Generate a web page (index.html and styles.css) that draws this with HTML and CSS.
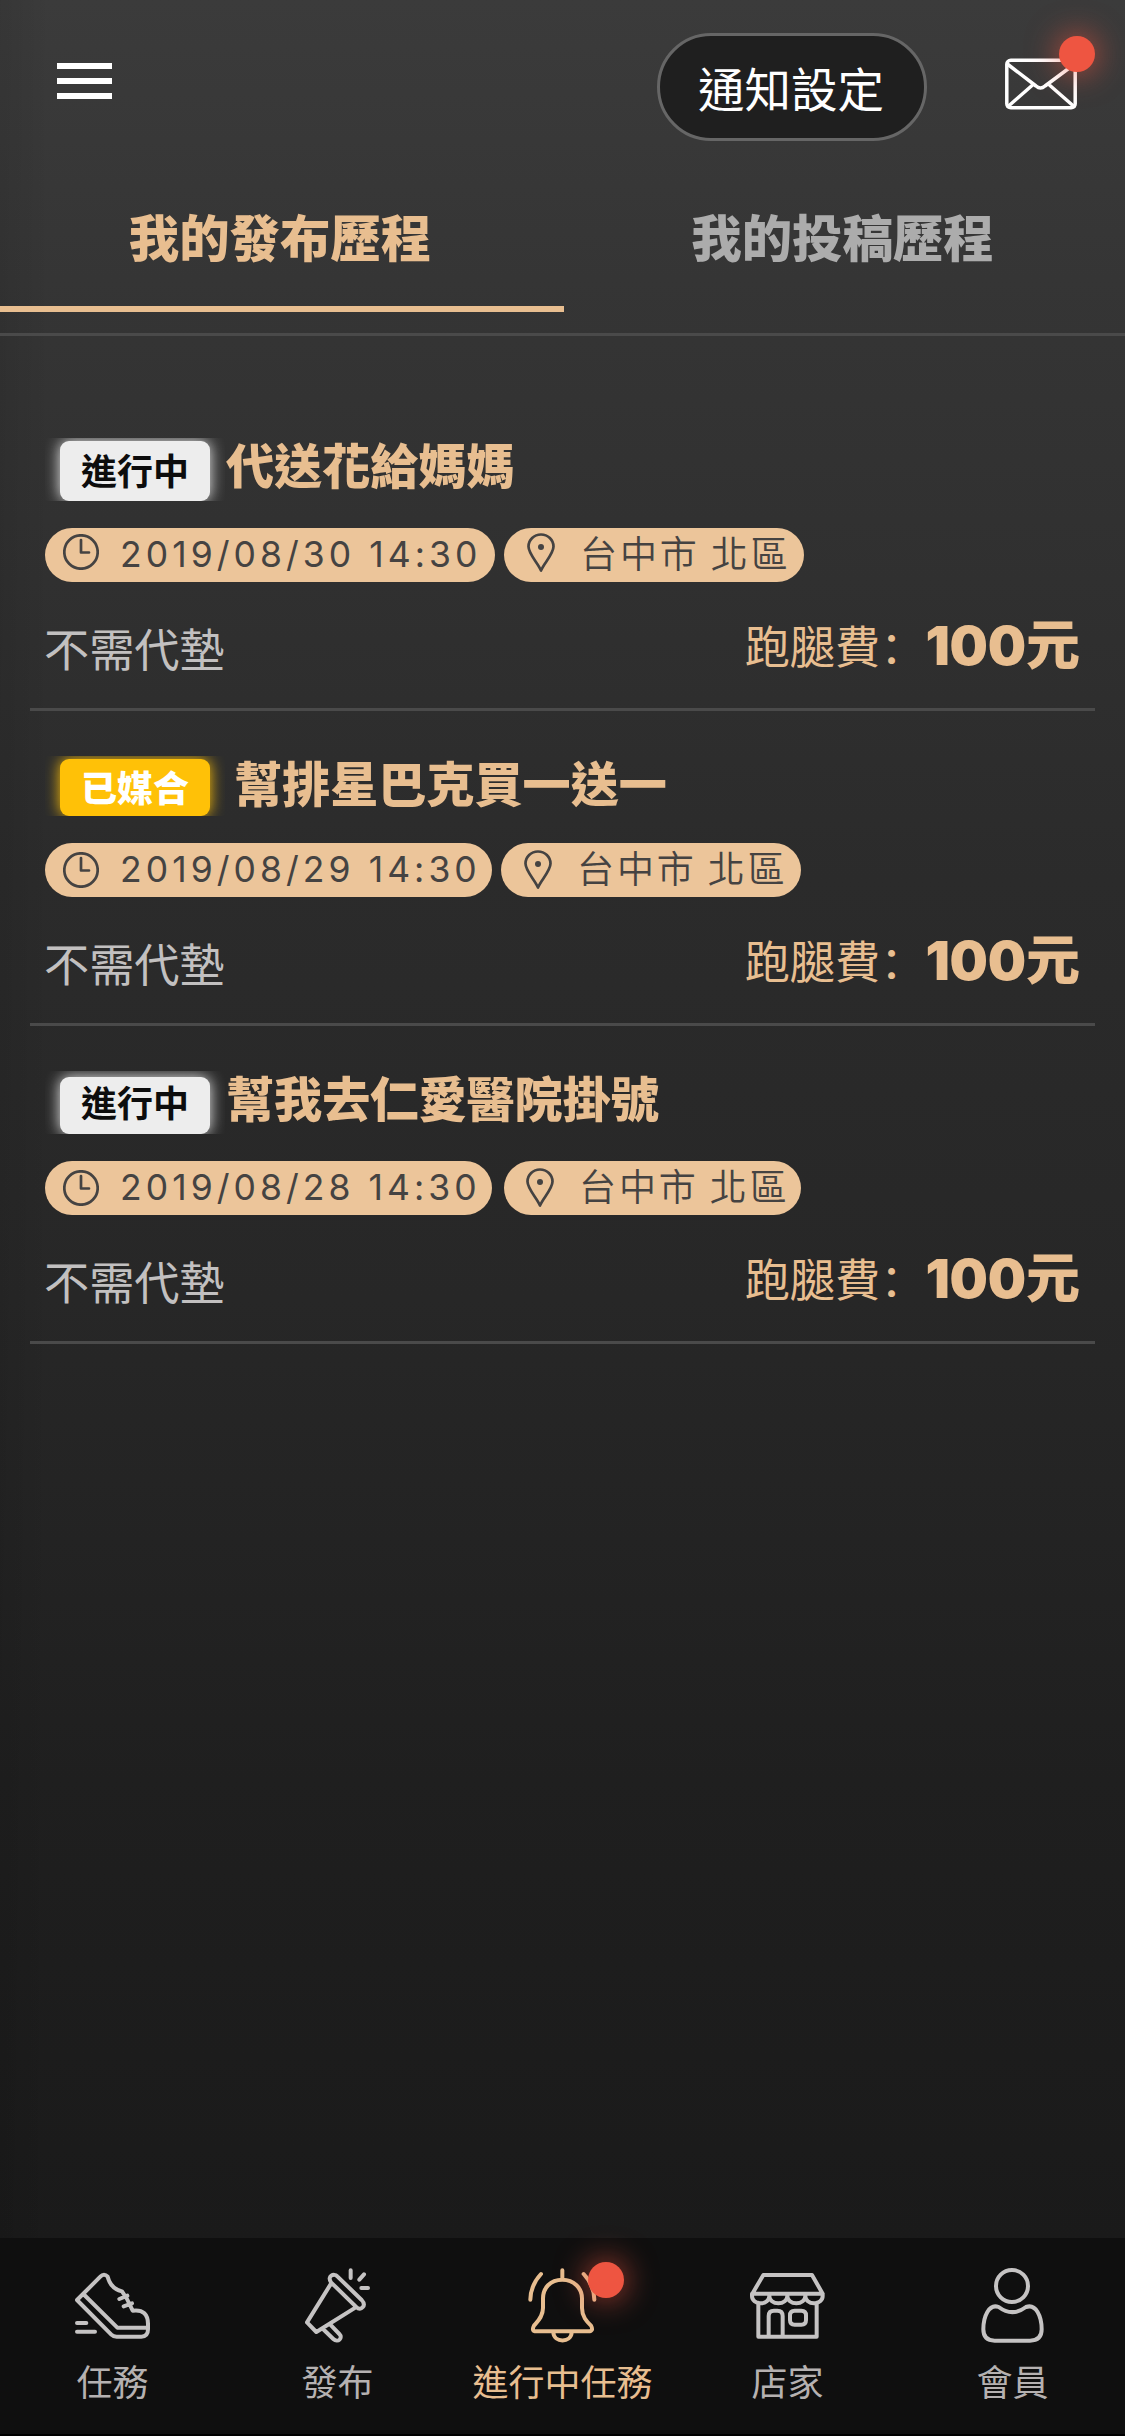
FILE: index.html
```html
<!DOCTYPE html>
<html lang="zh-Hant">
<head>
<meta charset="utf-8">
<title>我的發布歷程</title>
<link rel="stylesheet" href="styles.css">
</head>
<body>
<svg class="defs" aria-hidden="true">
  <symbol id="clock" viewBox="0 0 36 36"><circle cx="18" cy="18" r="16.7"/><path d="M18 6v12.5h8"/></symbol>
  <symbol id="pin" viewBox="0 0 28 40"><path d="M14 37.500C11 30 1.500 21 1.500 13.500a12.500 12 0 0 1 25 0C26.500 21 17 30 14 37.500z"/><circle class="dot" cx="14" cy="14" r="3"/></symbol>
</svg>
<div class="screen">
  <header class="topbar">
    <button class="menu" aria-label="選單"><i></i><i></i><i></i></button>
    <button class="notify">通知設定</button>
    <div class="mail">
      <svg viewBox="0 0 72 54"><rect x="1.800" y="3.300" width="68.400" height="47.400" rx="4"/><path d="M3 7.500l28 21.500q4.500 4 9 0L69 7.500M3 49.500l24-21M69 49.500L45 28.500"/></svg>
      <span class="alert"></span>
    </div>
  </header>
  <nav class="tabs">
    <a class="tab active">我的發布歷程</a>
    <a class="tab">我的投稿歷程</a>
  </nav>
  <main class="list">
    <article class="task">
      <div class="head"><span class="status"><b>進行中</b></span><h2>代送花給媽媽</h2></div>
      <div class="pills">
        <span class="pill date"><svg class="clock"><use href="#clock"/></svg><span>2019/08/30 14:30</span></span>
        <span class="pill place"><svg class="pin"><use href="#pin"/></svg><span>台中市 北區</span></span>
      </div>
      <div class="cost"><span>不需代墊</span><span class="fee">跑腿費<i>：</i><strong>100<em>元</em></strong></span></div>
    </article>
    <article class="task second">
      <div class="head"><span class="status matched"><b>已媒合</b></span><h2>幫排星巴克買一送一</h2></div>
      <div class="pills">
        <span class="pill date"><svg class="clock"><use href="#clock"/></svg><span>2019/08/29 14:30</span></span>
        <span class="pill place"><svg class="pin"><use href="#pin"/></svg><span>台中市 北區</span></span>
      </div>
      <div class="cost"><span>不需代墊</span><span class="fee">跑腿費<i>：</i><strong>100<em>元</em></strong></span></div>
    </article>
    <article class="task third">
      <div class="head"><span class="status"><b>進行中</b></span><h2>幫我去仁愛醫院掛號</h2></div>
      <div class="pills">
        <span class="pill date"><svg class="clock"><use href="#clock"/></svg><span>2019/08/28 14:30</span></span>
        <span class="pill place"><svg class="pin"><use href="#pin"/></svg><span>台中市 北區</span></span>
      </div>
      <div class="cost"><span>不需代墊</span><span class="fee">跑腿費<i>：</i><strong>100<em>元</em></strong></span></div>
    </article>
  </main>
  <footer class="bottom">
    <a class="item"><svg viewBox="225 144 225 225"><path d="M231 240L301 170Q312 158 323 170C328 190 340 208 366 214L381 237L398 272Q445 266 444 315V328Q444 350 424 350H350Q340 350 334 344ZM250 222L352 323H443M358 237l24-10M371 259l25-9M231 309h28M231 335h54"/></svg>任務</a>
    <a class="item"><svg viewBox="900 144 225 225"><path d="M993 187C980 169 1002 158 1012 169L1085 240C1101 257 1082 274 1070 262ZM993 191L921 307L949 336L1066 263M969 327L1000 357C1014 370 1030 354 1018 342L991 314M1052 151v23M1078 179l14-16M1084 204h20"/></svg>發布</a>
    <a class="item current"><svg viewBox="375 144 225 225"><path d="M487 151v28M487 179C450 179 429 205 429 235V264C429 290 413 304 402 317Q393 334 409 334H565Q582 334 573 317C560 304 546 290 546 264V235C546 205 522 179 487 179M460 338C462 369 513 369 515 338M423 162Q392 195 391 239M551 162Q582 195 583 239"/></svg><span class="alert"></span>進行中任務</a>
    <a class="item"><svg viewBox="1050 144 225 225"><path d="M1090 165H1236L1268 221H1057ZM1056 221V228A26 22 0 0 0 1108 228A27 22 0 0 0 1162 228A27 22 0 0 0 1216 228A26 22 0 0 0 1268 228V221M1108 221v7M1162 221v7M1216 221v7M1075 248V350H1250V248M1106 348V288Q1106 272 1122 272H1132Q1148 272 1148 288V348M1184 272H1204Q1218 272 1218 286V300Q1218 314 1204 314H1184Q1170 314 1170 300V286Q1170 272 1184 272"/></svg>店家</a>
    <a class="item"><svg viewBox="825 144 225 225"><circle cx="936" cy="198" r="48"/><path d="M896 261Q937 292 978 261C1008 250 1025 289 1025 328Q1025 362 990 362H884Q850 362 850 328C850 289 867 250 896 261Z"/></svg>會員</a>
  </footer>
</div>
</body>
</html>
```
FILE: styles.css
```css
* { box-sizing: border-box; }
body { margin: 0; background: #1a1a1a; font-family: "Noto Sans CJK TC", sans-serif; }
.defs { position: absolute; width: 0; height: 0; }
svg { display: block; fill: none; stroke: currentColor; stroke-linecap: round; stroke-linejoin: round; }
.screen {
  width: 1125px; height: 2436px; overflow: hidden;
  display: flex; flex-direction: column;
  background:
    linear-gradient(90deg, rgba(0,0,0,.08), transparent 50px),
    linear-gradient(#3b3b3b, #353535 280px, #313131 520px, #2b2b2b 880px, #272727 1300px, #1f1f1f 1780px, #1a1a1a 2240px);
}
button { padding: 0; border: 0; background: none; color: #fff; font-family: inherit; }
.topbar { height: 168px; padding: 33px 48px 0 57px; display: flex; align-items: flex-start; }
.menu { width: 55px; margin-top: 30px; margin-right: auto; display: grid; gap: 9px; }
.menu i { height: 6px; background: #fff; }
.notify {
  width: 270px; height: 108px; border: 3px solid #666; border-radius: 54px; padding-right: 2px;
  background: #1f1f1f; font-size: 46.500px; line-height: 100px; white-space: nowrap;
}
.mail { position: relative; width: 72px; margin: 24px 0 0 78px; color: #fff; }
.mail svg { width: 72px; height: 54px; stroke-width: 3.500; }
.alert {
  position: absolute; width: 36px; height: 36px; border-radius: 50%;
  background: #ee5541; box-shadow: 0 0 30px 3px rgba(238,85,65,.6);
}
.mail .alert { left: 54px; top: -21px; }

.tabs { height: 168px; display: flex; border-bottom: 3px solid #4a4a4a; font-size: 50.400px; font-weight: 900; line-height: 72px; }
.tab { height: 144px; padding: 32px 4px 0 0; flex: 1; text-align: center; color: #acacac; }
.tab.active { flex: 0 0 564px; color: #e8be90; border-bottom: 6px solid #e8be90; }

.list { flex: 1; padding: 102px 30px 0; }
.task { height: 273px; padding-left: 15px; border-bottom: 3px solid #4a4a4a; }
.task.second { height: 270px; margin-top: 45px; }
.task.third { height: 270px; margin-top: 48px; }
.head { display: flex; height: 63px; }
.status { width: 180px; height: 63px; padding: 3px 15px 0; overflow: hidden; }
.status b {
  display: block; height: 60px; border-radius: 9px; text-align: center;
  background: #ededed; color: #0d0d0d; box-shadow: 0 0 15px #ededed;
  font-size: 36px; line-height: 56px;
}
.second .head, .third .head { height: 60px; }
.second .status, .third .status { height: 60px; }
.second .status b { height: 57px; line-height: 54px; font-weight: 900; }
.third .status { margin-top: -3px; height: 63px; padding-top: 6px; }
.third .status b { height: 57px; line-height: 49px; }
.status.matched b { background: #ffc107; color: #fff; box-shadow: 0 0 15px #ffc107; }
.head h2 { margin: -10px 0 0 1px; color: #e8be90; font-size: 48.100px; font-weight: 900; line-height: 70px; white-space: nowrap; }
.second h2 { margin-left: 9px; }
.third h2 { margin-top: -13px; }

.pills { display: flex; gap: 9px; margin-top: 27px; color: #454342; }
.pill {
  height: 54px; border-radius: 27px; background: #ecc59a; display: flex;
  align-items: center; font-size: 36px; white-space: nowrap;
}
.date { width: 450px; padding-left: 18px; font-family: Inter, sans-serif; font-size: 35.500px; letter-spacing: 4.050px; }
.date span { margin: -1px 0 0 21px; }
.clock { width: 36px; height: 36px; stroke-width: 2.700; margin-top: -6px; }
.place { width: 300px; padding-left: 23px; font-size: 37px; letter-spacing: 2.900px; line-height: 48px; font-weight: 350; }
.place span { margin: -6px 0 0 25px; }
.pin { width: 28px; height: 40px; stroke-width: 2.700; margin-top: -4px; }
.dot { fill: currentColor; stroke: none; }
.second .date, .third .date { width: 447px; }
.second .clock, .second .pin, .third .clock, .third .pin { margin-top: 0; }
.third .pills { gap: 12px; }
.third .place { width: 297px; padding-left: 22px; }

.cost { display: flex; justify-content: space-between; padding: 33px 15px 0 0; color: #c2c0c0; font-size: 45.200px; line-height: 66px; }
.cost > span { margin-left: -1px; white-space: nowrap; }
.cost .fee { margin-top: -3px; display: flex; color: #e8be90; }
.fee i { font-family: "Noto Sans CJK SC", sans-serif; font-style: normal; }
.fee strong { font-family: Inter, sans-serif; font-weight: 900; font-size: 54px; letter-spacing: -.200px; line-height: 60px; }
.fee em { font-family: "Noto Sans CJK TC", sans-serif; font-style: normal; font-weight: 900; letter-spacing: 0; }

.bottom { height: 198px; background: #0f0f0f; border-bottom: 2px solid #000; display: flex; color: #b5b1b1; }
.item { position: relative; flex: 1; padding: 30px 0 0; text-align: center; font-size: 36px; line-height: 74px; white-space: nowrap; }
.item svg { width: 75px; height: 75px; margin: 0 auto; stroke-width: 12; color: #c5c3c3; }
.item.current, .item.current svg { color: #e8be90; }
.item .alert { left: 138px; top: 24px; }
```
